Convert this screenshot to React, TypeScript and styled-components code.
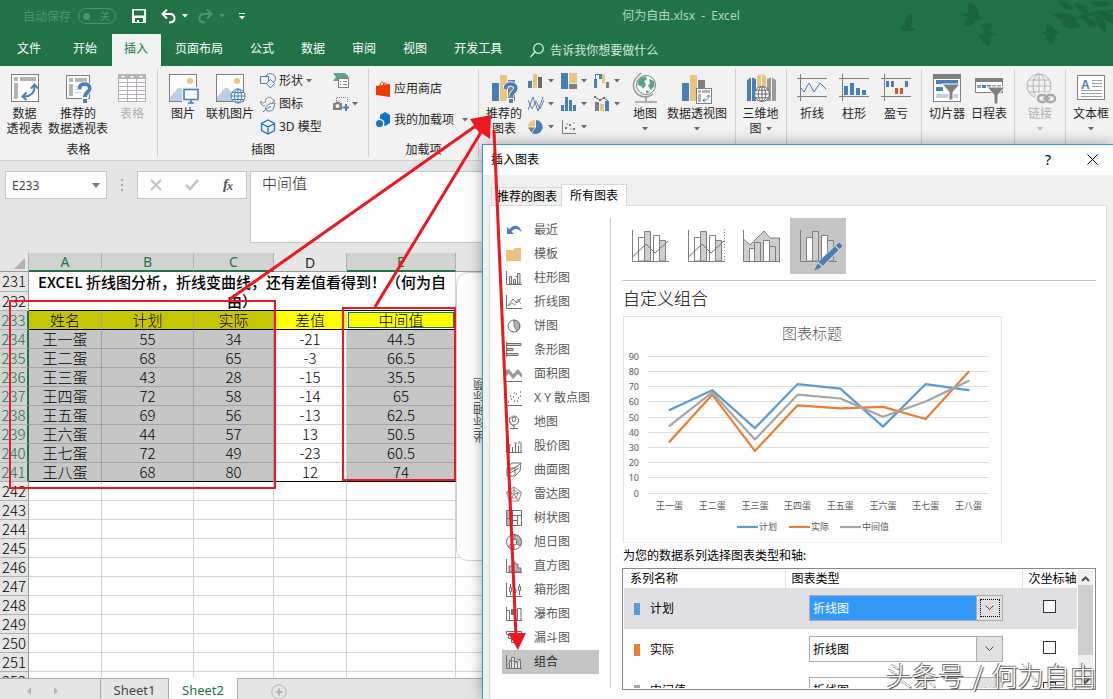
import React from "react";
import styled, { createGlobalStyle, css } from "styled-components";

const GREEN = "#217346";
const BLUE = "#477fb9";
const GOLD = "#ecc57c";
const GRAY = "#7f7f7f";
const RED = "#ee1620";
const UI = `"Noto Sans", "Noto Sans CJK SC", sans-serif`;
const SHEET = `"Noto Sans CJK SC", "Noto Sans", sans-serif`;

const Global = createGlobalStyle`
  * { box-sizing: border-box; }
  body { margin: 0; font-family: ${UI}; font-size: 12px; color: #262626; overflow: hidden; }
  button, input, select, textarea { font: inherit; color: inherit; margin: 0; }
  button { background: none; border: 0; padding: 0; }
  svg { display: block; flex: none; }
`;

const Page = styled.div`
  position: relative;
  display: flex;
  flex-direction: column;
  height: 100vh;
  overflow: hidden;
  background: #e6e6e6;
`;

/* ---------- title bar and ribbon tabs ---------- */

const Head = styled.header`
  position: relative;
  background: ${GREEN};
  color: #fff;
`;
const Birds = styled.svg`
  position: absolute;
  top: 0;
  right: 0;
`;
const TitleBar = styled.div`
  display: flex;
  align-items: center;
  height: 34px;
  padding: 0 0 2px 23px;
`;
const QuickAccess = styled.div`
  display: flex;
  align-items: center;
  width: 226px;
  color: #4f9370;
`;
const Switch = styled.button`
  display: flex;
  align-items: center;
  justify-content: space-between;
  width: 38px;
  height: 16px;
  margin: 0 16px 0 7px;
  padding: 0 5px 0 4px;
  border: 1px solid #4f9370;
  border-radius: 8px;
  font-size: 10px;
  line-height: 14px;
  &::before {
    content: "";
    width: 7px;
    height: 7px;
    border-radius: 50%;
    background: #4f9370;
  }
`;
const QuickButton = styled.button<{ $gap: number }>`
  margin-right: ${(p) => p.$gap}px;
`;
const DocTitle = styled.h1`
  flex: 1;
  margin: 0;
  text-align: center;
  font-size: 12px;
  font-weight: 400;
  line-height: 18px;
  color: #b5d6c3;
  white-space: pre;
`;
const Tabs = styled.nav`
  display: flex;
  gap: 2px;
  height: 32px;
`;
const Tab = styled.button<{ $active?: boolean; $file?: boolean }>`
  padding: ${(p) => (p.$file ? "0 18px 2px 17px" : "0 13px 2px 12px")};
  line-height: 18px;
  white-space: nowrap;
  color: ${(p) => (p.$active ? GREEN : "#fff")};
  background: ${(p) => (p.$active ? "#f2f2f2" : "transparent")};
`;
const TellMe = styled.button`
  display: flex;
  align-items: center;
  gap: 6px;
  margin-left: 13px;
  color: #d6e8de;
  white-space: nowrap;
`;

/* ---------- ribbon ---------- */

const Ribbon = styled.div`
  display: flex;
  height: 95px;
  padding-top: 3px;
  background: #f2f2f2;
  border-bottom: 1px solid #d2d2d2;
  overflow: hidden;
`;
const Group = styled.section<{ $width?: number; $pad: number }>`
  display: flex;
  flex-direction: column;
  justify-content: space-between;
  flex: ${(p) => (p.$width ? `0 0 ${p.$width}px` : "1")};
  height: 88px;
  padding-left: ${(p) => p.$pad}px;
  border-right: ${(p) => (p.$width ? "1px solid #d0d0d0" : "0")};
`;
const GroupBody = styled.div`
  display: flex;
`;
const GroupLabel = styled.div<{ $pad: number }>`
  margin-left: -${(p) => p.$pad}px;
  text-align: center;
  line-height: 14px;
`;
const BigButton = styled.button<{ $width: number; $dim?: boolean }>`
  display: flex;
  flex-direction: column;
  align-items: center;
  gap: 2px;
  width: ${(p) => p.$width}px;
  padding-top: 3px;
  line-height: 15px;
  white-space: nowrap;
  color: ${(p) => (p.$dim ? "#b1b1b1" : "#262626")};
`;
const Line = styled.span`
  display: flex;
  align-items: center;
  justify-content: center;
  gap: 4px;
  height: 15px;
`;
const SmallColumn = styled.div<{ $left?: number; $width: number; $top?: number }>`
  display: flex;
  flex-direction: column;
  width: ${(p) => p.$width}px;
  margin-left: ${(p) => p.$left || 0}px;
  padding-top: ${(p) => p.$top || 0}px;
`;
const SmallButton = styled.button<{ $height?: number; $gap?: number }>`
  display: flex;
  align-items: center;
  gap: ${(p) => p.$gap ?? 3}px;
  height: ${(p) => p.$height || 23}px;
  line-height: 18px;
  white-space: nowrap;
`;
const ChartGrid = styled.div`
  display: grid;
  grid-template-columns: repeat(3, 33px);
  grid-auto-rows: 23px;
  margin-left: 1px;
`;
const Spacer = styled.span`
  width: 4px;
`;

const Caret = ({ color = "#6a6a6a" }: { color?: string }) => (
  <svg width="6" height="4" viewBox="0 0 6 4">
    <path d="M0 0H6L3 3.5Z" fill={color} />
  </svg>
);

/* ---------- formula bar ---------- */

const FormulaRow = styled.div`
  display: flex;
  align-items: flex-start;
  height: 92px;
  padding: 10px 0 0 5px;
`;
const Boxed = css`
  border: 1px solid #c6c6c6;
  background: #fff;
`;
const NameBox = styled.div`
  ${Boxed}
  display: flex;
  align-items: center;
  width: 102px;
  height: 28px;
  padding: 0 6px;
`;
const NameInput = styled.input`
  flex: 1;
  min-width: 0;
  padding: 0;
  border: 0;
  background: none;
  color: #444;
`;
const Grip = styled.div`
  width: 30px;
  height: 28px;
  display: flex;
  flex-direction: column;
  align-items: center;
  justify-content: center;
  gap: 3px;
  i {
    width: 2px;
    height: 2px;
    background: #a6a6a6;
  }
`;
const FormulaTools = styled.div`
  ${Boxed}
  display: flex;
  align-items: center;
  justify-content: space-between;
  width: 110px;
  height: 28px;
  margin-right: 3px;
  padding: 0 11px 0 12px;
`;
const FormulaInput = styled.textarea`
  ${Boxed}
  flex: 1;
  height: 72px;
  padding: 1px 11px;
  resize: none;
  font-family: ${SHEET};
  font-size: 15px;
  font-weight: 300;
  line-height: 20px;
  color: #262626;
`;

/* ---------- worksheet ---------- */

const SheetArea = styled.main`
  position: relative;
  flex: 1;
  min-height: 0;
  overflow: hidden;
  background: #fff;
`;
const Grid = styled.table`
  width: 100%;
  table-layout: fixed;
  border-collapse: separate;
  border-spacing: 0;
  font-family: ${SHEET};
  font-size: 15px;
  font-weight: 300;
  line-height: 18px;
  text-align: center;
  color: #000;
`;
const ColHead = styled.th<{ $on?: boolean; $last?: boolean }>`
  height: 19px;
  padding: 0;
  font-family: ${UI};
  font-size: 14px;
  font-weight: 400;
  line-height: 17px;
  background: ${(p) => (p.$on ? "#d2d2d2" : "#e6e6e6")};
  color: ${(p) => (p.$on ? GREEN : "#262626")};
  border-right: ${(p) => (p.$last ? "0" : "1px solid #b1b1b1")};
  border-bottom: ${(p) => (p.$on ? `2px solid ${GREEN}` : "1px solid #9b9b9b")};
`;
const RowHead = styled.th<{ $on?: boolean }>`
  height: 19px;
  padding: 0;
  font-weight: 300;
  background: ${(p) => (p.$on ? "#d2d2d2" : "#e6e6e6")};
  color: ${(p) => (p.$on ? GREEN : "#000")};
  border-right: ${(p) => (p.$on ? `2px solid ${GREEN}` : "1px solid #9b9b9b")};
  border-bottom: 1px solid #b1b1b1;
`;
const TitleCell = styled.td`
  padding: 0;
  font-weight: 500;
  line-height: 19px;
  vertical-align: top;
  white-space: nowrap;
  text-spacing-trim: space-all;
  border-bottom: 1px solid #000;
  border-right: 1px solid #d4d4d4;
`;
const Cell = styled.td<{ $fill?: string; $sel?: boolean; $rule?: boolean; $active?: boolean }>`
  height: 19px;
  padding: 0;
  background: ${(p) => p.$fill || "#fff"};
  border-right: 1px solid ${(p) => (p.$sel ? "#a3a3a3" : "#d4d4d4")};
  border-bottom: 1px solid ${(p) => (p.$rule ? "#000" : p.$sel ? "#a3a3a3" : "#d4d4d4")};
  box-shadow: ${(p) => (p.$active ? `inset 0 0 0 1px #fff, inset 0 0 0 2px ${GREEN}` : "none")};
`;
const ChartObject = styled.div`
  position: absolute;
  top: 19px;
  left: 456px;
  right: 0;
  height: 289px;
  padding: 105px 0 0 15px;
  border: 1px solid #d0d0d0;
  border-radius: 12px;
  background: #fff;
`;
const AxisTitle = styled.div`
  writing-mode: vertical-rl;
  transform: rotate(180deg);
  width: 16px;
  font-size: 13px;
  line-height: 16px;
  color: #595959;
`;
const SheetBar = styled.footer`
  display: flex;
  height: 21px;
  flex: none;
  border-top: 1px solid #ababab;
  color: #444;
`;
const SheetNav = styled.div`
  display: flex;
  align-items: center;
  gap: 23px;
  width: 100px;
  padding: 4px 0 0 27px;
`;
const SheetTab = styled.button<{ $active?: boolean }>`
  width: 69px;
  padding-top: 2px;
  font-size: 13px;
  line-height: 18px;
  border: solid #ababab;
  border-width: 0 1px;
  ${(p) =>
    p.$active &&
    css`
      margin-top: -1px;
      border-left: 0;
      background: #fff;
      color: ${GREEN};
      padding-top: 3px;
    `}
`;
const AddSheet = styled.button`
  margin-left: 33px;
  padding-top: 5px;
  align-self: flex-start;
`;

/* ---------- dialog ---------- */

const Dialog = styled.section`
  position: absolute;
  top: 144px;
  left: 482px;
  right: 0;
  bottom: 0;
  display: flex;
  flex-direction: column;
  overflow: hidden;
  background: #f0f0f0;
  color: #000;
  border: solid #3398cc;
  border-width: 1px 0 0 1px;
`;
const DialogShadow = styled.div`
  position: absolute;
  top: 144px;
  left: 482px;
  right: 0;
  bottom: 0;
  box-shadow: 0 0 14px rgba(0, 0, 0, 0.35);
`;
const DialogTitle = styled.div`
  display: flex;
  align-items: center;
  height: 30px;
  padding: 0 15px 1px 8px;
  background: #fff;
  h2 {
    flex: 1;
    margin: 0;
    font-size: 12px;
    font-weight: 400;
    line-height: 18px;
  }
`;
const HelpButton = styled.button`
  width: 20px;
  margin-right: 29px;
  font-size: 14px;
  line-height: 20px;
`;
const DialogTabs = styled.div`
  display: flex;
  align-items: flex-end;
  height: 30px;
  padding-left: 8px;
`;
const DialogTab = styled.button<{ $active?: boolean }>`
  height: ${(p) => (p.$active ? 22 : 18)}px;
  padding: 0 5px;
  line-height: 18px;
  white-space: nowrap;
  border: 1px solid #d9d9d9;
  border-bottom: 0;
  background: ${(p) => (p.$active ? "#fff" : "#f0f0f0")};
  ${(p) =>
    p.$active &&
    css`
      position: relative;
      margin-bottom: -1px;
      padding: 0 8px;
      margin-left: -2px;
    `}
`;
const Panel = styled.div`
  display: flex;
  flex: 1;
  min-height: 0;
  margin: 0 6px 0 6px;
  padding: 12px 10px 0 12px;
  background: #fff;
  border: solid #d9d9d9;
  border-width: 1px 1px 0;
`;
const TypeList = styled.ul`
  flex: 0 0 109px;
  height: 470px;
  margin: 0;
  padding: 0 11px 0 0;
  list-style: none;
  border-right: 1px solid #c6c6c6;
`;
const TypeItem = styled.button<{ $on?: boolean }>`
  display: flex;
  align-items: center;
  gap: 12px;
  width: 97px;
  height: 24px;
  padding-left: 4px;
  line-height: 18px;
  white-space: nowrap;
  text-align: left;
  background: ${(p) => (p.$on ? "#c5c5c5" : "transparent")};
  color: ${(p) => (p.$on ? "#262626" : "#595959")};
`;
const Right = styled.div`
  flex: 1;
  min-width: 0;
  padding-left: 11px;
`;
const Thumbs = styled.div`
  display: flex;
  height: 63px;
  border-bottom: 1px solid #c6c6c6;
`;
const Thumb = styled.button<{ $on?: boolean }>`
  width: 56px;
  height: 56px;
  background: ${(p) => (p.$on ? "#c5c5c5" : "transparent")};
`;
const Heading = styled.h3`
  margin: 6px 0 5px 1px;
  font-size: 17px;
  font-weight: 300;
  line-height: 24px;
`;
const ChartBox = styled.div`
  width: 379px;
  height: 227px;
  margin-left: 1px;
  border: 1px solid #e3e3e3;
  border-bottom-color: #f3f3f3;
`;
const Caption = styled.p`
  margin: 4px 0 3px 1px;
  line-height: 18px;
`;
const SeriesBox = styled.div`
  display: flex;
  height: 122px;
  padding: 1px 2px 0 1px;
  overflow: hidden;
  border: 1px solid #828790;
`;
const TableClip = styled.div`
  flex: 1;
  height: 118px;
  overflow: hidden;
`;
const SeriesTable = styled.table`
  width: 100%;
  table-layout: fixed;
  border-collapse: collapse;
  th {
    height: 18px;
    padding: 0 0 0 6px;
    font-weight: 400;
    line-height: 18px;
    text-align: left;
    white-space: nowrap;
    border-left: 1px solid #e0e0e0;
  }
  th:first-child {
    border-left: 0;
  }
  td {
    height: 41px;
    padding: 0;
  }
`;
const SeriesRow = styled.tr<{ $on?: boolean }>`
  background: ${(p) => (p.$on ? "#e0dfe4" : "#fff")};
`;
const SeriesName = styled.label<{ $color: string }>`
  display: flex;
  align-items: center;
  gap: 10px;
  padding-left: 10px;
  line-height: 18px;
  &::before {
    content: "";
    width: 6px;
    height: 12px;
    background: ${(p) => p.$color};
  }
`;
const SelectWrap = styled.div<{ $on?: boolean }>`
  display: flex;
  width: 194px;
  height: 26px;
  margin: 0 0 1px 24px;
  border: 1px solid #acacac;
  select {
    flex: 1;
    min-width: 0;
    padding: 0 3px;
    border: 0;
    border-radius: 0;
    appearance: none;
    outline: 0;
    background: ${(p) => (p.$on ? "#3399ff" : "#fff")};
    color: ${(p) => (p.$on ? "#fff" : "#000")};
  }
`;
const DropMark = styled.span<{ $on?: boolean }>`
  display: flex;
  align-items: center;
  justify-content: center;
  width: 26px;
  background: #e1e1e1;
  border-left: 1px solid #acacac;
  span {
    display: flex;
    align-items: center;
    justify-content: center;
    width: 20px;
    height: 18px;
    border: 1px dotted ${(p) => (p.$on ? "#000" : "transparent")};
  }
`;
const Check = styled.input`
  display: block;
  width: 13px;
  height: 13px;
  margin: 0 0 5px 21px;
  appearance: none;
  border: 1px solid #333;
  background: #fff;
`;
const ScrollBar = styled.div`
  display: flex;
  flex-direction: column;
  align-items: center;
  justify-content: space-between;
  width: 15px;
  height: 118px;
  margin-left: 1px;
  padding: 6px 0 4px;
  background: #f0f0f0;
`;
const ScrollThumb = styled.div`
  width: 15px;
  height: 70px;
  margin-bottom: 20px;
  background: #cdcdcd;
`;
const Watermark = styled.div`
  position: absolute;
  right: 17px;
  bottom: 6px;
  font-family: ${SHEET};
  font-size: 26px;
  font-weight: 300;
  line-height: 36px;
  white-space: pre;
  color: #fff;
  text-shadow: 1px 1px 1px #333, -1px -1px 0 #777;
  span {
    padding: 0 3px;
  }
`;
const Marks = styled.svg`
  position: absolute;
  inset: 0;
  width: 100%;
  height: 100%;
  pointer-events: none;
`;

/* ---------- icons ---------- */

const Big = ({ children }: { children: React.ReactNode }) => (
  <svg width="32" height="32" viewBox="0 0 32 32" fill="none">{children}</svg>
);
const Sm = ({ children }: { children: React.ReactNode }) => (
  <svg width="16" height="16" viewBox="0 0 16 16" fill="none">{children}</svg>
);

const Question = () => (
  <>
    <path d="M17.500 17C17.500 13.200 20 12 22.500 12C25.500 12 27.800 13.500 27.800 16.300C27.800 20 23 20 23 25" stroke="#f2f2f2" strokeWidth="5.400" />
    <path d="M17.500 17C17.500 13.200 20 12 22.500 12C25.500 12 27.800 13.500 27.800 16.300C27.800 20 23 20 23 25" stroke={BLUE} strokeWidth="3.600" />
    <rect x="20" y="26" width="6" height="6" fill="#f2f2f2" />
    <rect x="21" y="27" width="4" height="4" fill={BLUE} />
  </>
);
const Picture = () => (
  <>
    <rect x="2.500" y="2.500" width="27" height="27" fill="#fff" stroke={GRAY} />
    <circle cx="23" cy="9" r="3" fill={GOLD} />
    <path d="M3 29V25L11 16L14 16L21 24V29Z" fill="#bdd0e8" />
  </>
);
const Globe = ({ cx, cy, r, color, bg = "#f2f2f2" }: { cx: number; cy: number; r: number; color: string; bg?: string }) => (
  <g stroke={color}>
    <circle cx={cx} cy={cy} r={r} fill={bg} />
    <ellipse cx={cx} cy={cy} rx={r / 2} ry={r} />
    <path d={`M${cx} ${cy - r}V${cy + r}M${cx - r} ${cy}H${cx + r}M${cx - r * 0.85} ${cy - r / 2}H${cx + r * 0.85}M${cx - r * 0.85} ${cy + r / 2}H${cx + r * 0.85}`} />
  </g>
);

const PivotIcon = () => (
  <Big>
    <rect x="2.500" y="2.500" width="27" height="27" fill="#fff" stroke={GRAY} />
    <path d="M5 5H9V9H5ZM11 5H27V9H11ZM5 11H9V27H5Z" fill="#b3b3b3" />
    <path d="M14 24.500C21 25 26 21 25.500 13.500" stroke={BLUE} strokeWidth="2" />
    <path d="M22 16.500L25.500 12.500L29 16.500M17.500 20.500L13.500 24.500L17.500 28" stroke={BLUE} strokeWidth="2" />
  </Big>
);
const PivotHelpIcon = () => (
  <Big>
    <rect x="4.500" y="3.500" width="23" height="23" fill="#fff" stroke={GRAY} />
    <path d="M7 6H11V10H7ZM13 6H25V10H13ZM7 12H11V24H7Z" fill="#b3b3b3" />
    <path d="M13 14.500H20M13 17.500H20M13 20.500H20" stroke="#d0d0d0" />
    <Question />
  </Big>
);
const TableIcon = () => (
  <Big>
    <path d="M2 2H30V30H2Z" fill="#b3b3b3" />
    <path d="M3 7H29V29H3Z" fill="#fff" />
    <path d="M3 10.500H29M3 14.500H29M3 18.500H29M3 22.500H29M3 26.500H29M11.500 7V29M20.500 7V29" stroke="#b8adb8" />
    <path d="M5 4H9L7 6ZM14 4H18L16 6ZM23 4H27L25 6Z" fill="#fff" />
  </Big>
);
const PictureIcon = () => (
  <Big>
    <Picture />
    <rect x="15" y="15" width="17" height="16" fill="#f2f2f2" />
    <rect x="17" y="17.500" width="14" height="10" fill="#fff" stroke={BLUE} strokeWidth="1.600" />
    <path d="M24 28V30.500M21 31H27" stroke={BLUE} strokeWidth="1.600" />
  </Big>
);
const OnlinePictureIcon = () => (
  <Big>
    <Picture />
    <Globe cx={24} cy={24} r={7} color={BLUE} bg="#fff" />
  </Big>
);
const ShapesIcon = () => (
  <Sm>
    <circle cx="10.500" cy="5.500" r="5" stroke={BLUE} fill="#f2f2f2" />
    <rect x="0.500" y="3.500" width="8" height="7" fill="#f2f2f2" stroke={BLUE} />
    <path d="M10.500 6.500L14.500 10.500L10.500 15L6.500 10.500Z" fill="#f2f2f2" stroke={BLUE} />
  </Sm>
);
const IconsIcon = () => (
  <Sm>
    <path d="M0.500 5C2 7.500 4 7 5.500 6C5 2.500 8 0.500 10.500 1.500C12.500 2.300 12 4.500 14.500 4C14 6 13 6.500 12 7M0.500 5C0.500 9 3 10 5 9.500" stroke={GRAY} />
    <path d="M15 7C10 7 5.500 9 5.500 13C5.500 15 10 16 12.500 14C14.500 12 14 9 15 7ZM3 16C6 12.500 9 11.500 11 10.500" stroke={BLUE} />
  </Sm>
);
const CubeIcon = () => (
  <Sm>
    <path d="M8 1L14.500 4.500V11.500L8 15L1.500 11.500V4.500ZM1.500 4.500L8 8L14.500 4.500M8 8V15" stroke="#1f74c4" strokeWidth="1.300" />
  </Sm>
);
const SmartArtIcon = () => (
  <Sm>
    <path d="M0 0H12L16 4L12 8H0L3 4Z" fill="#5aa588" />
    <rect x="5.500" y="5.500" width="10" height="9" fill="#fff" stroke={GRAY} />
    <path d="M7 8.500H8M10 8.500H14M7 11.500H8M10 11.500H14" stroke={GRAY} />
  </Sm>
);
const ScreenshotIcon = () => (
  <Sm>
    <path d="M3.500 5V1.500H14.500V6" stroke={GRAY} strokeDasharray="1 1" />
    <path d="M0 7H2L3 5.500H6L7 7H9V14H0Z" fill={GRAY} />
    <circle cx="4.500" cy="10" r="2" fill="#f2f2f2" />
    <path d="M13 8V15M9.500 11.500H16" stroke={BLUE} strokeWidth="2" />
  </Sm>
);
const StoreIcon = () => (
  <Sm>
    <path d="M0 5L14 3V16L0 14Z" fill="#eb3c00" />
    <path d="M4 5C4 0 8 0 8 4M7 5C7 1 11 1 10.500 4" stroke="#eb3c00" />
  </Sm>
);
const AddinsIcon = () => (
  <Sm>
    <path d="M4 3L9 0L14 3V11L9 14L8 13V9L4 7Z" fill="#0f72c6" />
    <circle cx="3.500" cy="11.500" r="3.500" fill="#0f72c6" />
    <path d="M4 7.500C7 7.500 8 9 8 12" stroke="#f2f2f2" />
  </Sm>
);
const ChartHelpIcon = () => (
  <Big>
    <rect x="4" y="11" width="7" height="18" fill={BLUE} />
    <rect x="12" y="3" width="7" height="26" fill={GOLD} />
    <rect x="20" y="8" width="7" height="21" fill={GRAY} />
    <Question />
  </Big>
);
const ColumnIcon = () => (
  <Sm>
    <rect x="0" y="8" width="4" height="7" fill={BLUE} />
    <rect x="5" y="1" width="4" height="14" fill={GOLD} />
    <rect x="10" y="4" width="4" height="11" fill="#6b6b6b" />
  </Sm>
);
const TreemapIcon = () => (
  <Sm>
    <rect width="7" height="16" fill={BLUE} />
    <rect x="8" width="8" height="10" fill={GOLD} />
    <rect x="8" y="11" width="8" height="5" fill={GRAY} />
  </Sm>
);
const WaterfallIcon = () => (
  <Sm>
    <rect x="0" y="6" width="3" height="9" fill={BLUE} />
    <path d="M1.500 6V1.500H8" stroke={BLUE} />
    <rect x="5" y="1" width="3" height="5" fill={BLUE} />
    <rect x="8" y="1" width="3" height="9" fill={GOLD} />
    <rect x="12" y="9" width="3" height="6" fill={GRAY} />
  </Sm>
);
const LinesIcon = () => (
  <Sm>
    <path d="M0 4L4 13L8 5L12 13L16 4" stroke={GRAY} />
    <path d="M0 14L5 1L10 15L15 1" stroke={BLUE} />
  </Sm>
);
const HistIcon = () => (
  <Sm>
    <path d="M0 9H3V15H0ZM4 1H7V15H4ZM8 4H11V15H8ZM12 9H15V15H12Z" fill={BLUE} />
  </Sm>
);
const ComboIcon = () => (
  <Sm>
    <rect x="1" y="6" width="4" height="9" fill={GRAY} />
    <rect x="6" y="8" width="4" height="7" fill={GOLD} />
    <rect x="11" y="5" width="4" height="10" fill={BLUE} />
    <path d="M1 1L6 4L10 2L14 5" stroke="#6b6b6b" />
    <path d="M0 0H2V2H0ZM5 3H7V5H5ZM9 1H11V3H9Z" fill="#6b6b6b" />
  </Sm>
);
const PieIcon = () => (
  <Sm>
    <path d="M8 1A7 7 0 1 1 4 14L8 8Z" fill={BLUE} />
    <path d="M7 1V7.500H0A7 7 0 0 1 7 1Z" fill={GOLD} />
    <path d="M0 8.500H7L3.500 13.500Z" fill={GRAY} />
  </Sm>
);
const ScatterIcon = () => (
  <Sm>
    <path d="M1.500 1V14.500H15" stroke={GRAY} />
    <path d="M4 8H6V10H4ZM8 5H10V7H8ZM12 9H14V11H12Z" fill={BLUE} />
    <path d="M5 4H7V6H5ZM9 9H11V11H9ZM12 3H14V5H12Z" fill={GOLD} />
  </Sm>
);
const MapIcon = () => (
  <Big>
    <circle cx="17" cy="13" r="9.500" fill="#fff" stroke={GRAY} />
    <path d="M9 9C11 5 14 4 17 4.500L18 8L15 9L17 13L14 17L12 14L8.500 13ZM20 7L25 9L25.500 14L22 18L19 14L21 11ZM17 18L21 20L17 21.500Z" fill="#5aa588" />
    <path d="M12 1L9 4C3 9 3 18 9 22.500C14 26 20 25.500 24 22M17 25V29M6 30H28" stroke="#9a9a9a" strokeWidth="1.600" />
  </Big>
);
const PivotChartIcon = () => (
  <Big>
    <rect x="1" y="11" width="7" height="18" fill={BLUE} />
    <rect x="9" y="3" width="7" height="26" fill={GOLD} />
    <rect x="17" y="8" width="7" height="21" fill={GRAY} />
    <rect x="15.500" y="16.500" width="15" height="15" fill="#fff" stroke={GRAY} />
    <path d="M17 18H20V21H17ZM21 18H29V21H21ZM17 22H20V30H17Z" fill="#b3b3b3" />
    <path d="M22 28.500C26 28.500 27.500 27 27.500 23.500M25.500 25L27.500 23L29.500 25M24 26.500L22 28.500L24 30.500" stroke={BLUE} />
  </Big>
);
const Map3DIcon = () => (
  <Big>
    <path d="M2 8L6 5.500V29H2ZM7 5.500L11 7V29H7Z" fill={BLUE} />
    <path d="M12 4L16 2V29H12ZM17 2L21 4V29H17Z" fill={GOLD} />
    <path d="M22 7L26 5.500V29H22ZM27 5.500L31 8V29H27Z" fill="#9a9a9a" />
    <Globe cx={17} cy={22} r={7.500} color="#6b6b6b" bg="#fff" />
  </Big>
);
const Spark = ({ children }: { children: React.ReactNode }) => (
  <Big>
    <path d="M1 6.500H31M1 24.500H31M4.500 2V29" stroke={GRAY} />
    {children}
  </Big>
);
const SlicerIcon = ({ timeline }: { timeline?: boolean }) => (
  <Big>
    {timeline ? (
      <>
        <rect x="2.500" y="6.500" width="27" height="14" fill="#fff" stroke={GRAY} />
        <rect x="2" y="6" width="28" height="4" fill={GRAY} />
        <path d="M4 14.500H8M19 14.500H28" stroke="#a0a0a0" strokeWidth="3" strokeDasharray="4 1" />
        <path d="M9 14.500H18" stroke={BLUE} strokeWidth="3" strokeDasharray="4 1" />
      </>
    ) : (
      <>
        <rect x="2.500" y="2.500" width="27" height="27" fill="#fff" stroke={GRAY} />
        <rect x="2" y="2" width="28" height="5" fill={GRAY} />
        <path d="M5 10H27M5 17H12" stroke={BLUE} strokeWidth="4" />
        <path d="M5 24H27" stroke="#bdd0e8" strokeWidth="4" />
      </>
    )}
    <path d={timeline ? "M14 15H32L25 23V32H21V23Z" : "M11 12H29L22 20V28H18V20Z"} fill={GRAY} stroke="#fff" />
  </Big>
);
const LinkIcon = () => (
  <Big>
    <Globe cx={15} cy={14} r={12} color="#b9b1b9" />
    <g stroke="#f2f2f2" strokeWidth="6"><rect x="14" y="23" width="9" height="7" rx="3.500" /><rect x="22" y="23" width="9" height="7" rx="3.500" /></g>
    <g stroke="#a9a9a9" strokeWidth="2.400"><rect x="14" y="23" width="9" height="7" rx="3.500" /><rect x="22" y="23" width="9" height="7" rx="3.500" /><path d="M19 26.500H26" /></g>
  </Big>
);
const TextBoxIcon = () => (
  <Big>
    <rect x="2.500" y="3.500" width="27" height="24" fill="#fff" stroke={GRAY} />
    <text x="6" y="17" fontSize="12" fontWeight="700" fontFamily="Liberation Sans, sans-serif" fill={BLUE}>A</text>
    <path d="M17 8.500H27M17 11.500H27M17 14.500H27M6 18.500H27M6 21.500H27M6 24.500H27" stroke="#a0a0a0" />
  </Big>
);

const BirdsArt = () => (
  <Birds width="218" height="60" viewBox="0 0 218 60" fill="#1c643b" aria-hidden="true">
    <path d="M17 14C11 15 9 20 10 25L5 27L9 31L18 31L21 29L15 27C18 23 17 18 17 14Z" />
    <path d="M75 3C82 5 84 12 84 17L87 19L80 21C78 26 73 28 68 25C71 23 72 20 73 17L66 14L74 13C71 9 73 5 75 3Z" />
    <path d="M86 25C92 22 97 24 99 24C97 26 95 28 95 31L102 34L94 37C95 41 96 43 94 46C89 44 86 41 87 38L82 36L90 33C88 30 88 27 86 25Z" />
    <path d="M153 24C158 25 158 27 159 29L165 32L160 36C160 40 159 43 157 45C153 43 151 39 151 35L146 33L152 31C150 28 152 26 153 24Z" />
    <path d="M218 12C200 14 188 16 178 22L176 20C186 13 200 11 218 10Z" />
    <path d="M158 15C168 10 175 13 180 18C172 22 163 21 158 15ZM163 1C170 0 175 3 178 9C171 10 165 7 163 1ZM180 3C188 3 193 8 193 14C186 14 181 9 180 3ZM196 2C204 2 210 0 216 3C210 9 201 8 196 2ZM166 22C174 18 181 20 186 26C179 30 170 29 166 22ZM187 16C195 16 200 20 201 27C193 27 188 23 187 16ZM200 15C208 16 212 22 211 33C204 29 200 23 200 15ZM202 9L218 15V24C210 21 204 16 202 9Z" />
  </Birds>
);

const UndoArrow = ({ color, flip }: { color: string; flip?: boolean }) => (
  <svg width="15" height="15" viewBox="0 0 15 15" fill="none">
    <g transform={flip ? "matrix(-1 0 0 1 15 0)" : undefined} stroke={color} strokeWidth="2">
      <path d="M1 5H9C12 5 13.500 7 13.500 9.500C13.500 12.500 11 13.500 8 13.500" />
      <path d="M6 0.500L1.500 5L6 9.500" />
    </g>
  </svg>
);

const g = "#6f6f6f";
const listIcons: React.ReactNode[] = [
  <Sm><path d="M1 5V12H8L5.500 9.500C8 6 12 6 15.500 10C14.500 4 8 1 3.500 7.500Z" fill={BLUE} /></Sm>,
  <Sm><path d="M0 4H7L9 2H15V15H0Z" fill="#ebc282" /></Sm>,
  <Sm><path d="M3.500 6.500H5.500V14H3.500ZM7.500 9.500H9.500V14H7.500ZM11.500 3.500H14V14H11.500Z" fill="#e0e0e0" stroke={g} /><path d="M0.500 1V14.500H16M9.500 6.500H11.500" stroke={g} /></Sm>,
  <Sm><path d="M0.500 1V14.500H16" stroke={g} /><path d="M2 12L7 5L11 9L15 4" stroke={g} /><path d="M3 12L6 9L9 11L12 5L15 10" stroke="#9a9a9a" /></Sm>,
  <Sm><circle cx="8" cy="8" r="6" stroke={g} /><path d="M8 2A6 6 0 0 1 11 13L8 8Z" fill="#b5b5b5" stroke={g} /></Sm>,
  <Sm><path d="M1 1.500H15V3.500H1ZM1 6.500H7V8.500H1ZM1 11.500H12V13.500H1Z" fill="#cfcfcf" stroke={g} /><path d="M0.500 0V15" stroke={g} /></Sm>,
  <Sm><path d="M0 10V4L3 3L7 8L12 3L16 8V12L12 8L7 13L3 8Z" fill="#9a9a9a" /><path d="M0 15.500H16" stroke={g} /></Sm>,
  <Sm><path d="M0 15.500H16" stroke={g} /><path d="M2 12H3M5 9H6M8 11H9M4 6H5M7 7H8M10 4H11M12 8H13M14 2H15M11 11H12M14 6H15M8 3H9" stroke={g} strokeWidth="1.500" /></Sm>,
  <Sm><circle cx="8" cy="6.500" r="4.500" stroke={g} /><path d="M6 4L9 3L10 6L7 8ZM4 3C2 8 5 12 9 12M8 12V14.500M4 14.500H12" stroke={g} /></Sm>,
  <Sm><path d="M0.500 1V14.500H16M3.500 14V7M6.500 14V9M9.500 14V6M12.500 14V8M15 14V4M2 7H5M8 5H11M13 3V6" stroke={g} /></Sm>,
  <Sm><path d="M1 6L6 1H15L14 9L9 14H1ZM1 6H9L15 1M9 6V14M3 9L12 4M2 12L13 6" stroke={g} /></Sm>,
  <Sm><path d="M8 1L15.500 6.500L12.500 15L3.500 15L0.500 6.500ZM8 8V1M8 8L15 6.500M8 8L12.500 15M8 8L3.500 15M8 8L0.500 6.500M8 4L12 7L10.500 12L5 12L4 7Z" stroke="#8a8a8a" /></Sm>,
  <Sm><path d="M1 1H6V15H1Z" fill="#b5b5b5" /><path d="M0.500 0.500H15.500V15.500H0.500ZM6.500 1V15M1 8.500H6M7 5.500H15M11.500 6V15M7 10.500H11" stroke={g} /></Sm>,
  <Sm><circle cx="8" cy="8" r="7.500" stroke={g} /><path d="M8 0.500A7.500 7.500 0 0 1 14.500 12L10.500 10V6L8 5ZM2 12.500L5 10L8 11V15.500A7 7 0 0 1 2 12.500Z" fill="#b5b5b5" stroke={g} /><circle cx="8" cy="8" r="3" stroke={g} /></Sm>,
  <Sm><path d="M3 8H6V4H9V6H12V10H15V14H3Z" fill="#b5b5b5" stroke={g} /><path d="M0.500 1V14.500H16" stroke={g} /></Sm>,
  <Sm><path d="M0.500 1V15M1 14.500H16M4.500 2V13M13.500 2V13M9 6V12" stroke={g} /><path d="M3.500 5.500H5.500V9.500H3.500ZM12.500 4.500H14.500V8.500H12.500ZM8 7.500H10V10.500H8Z" fill="#fff" stroke={g} /></Sm>,
  <Sm><path d="M0.500 1V15M1 14.500H16M3.500 14V4.500H1M11.500 14V2.500H15V14M7.500 4.500H11" stroke={g} /><path d="M5 3H9V9H5Z" fill={g} /></Sm>,
  <Sm><path d="M0.500 1.500H15.500V4.500H0.500ZM2.500 5H13.500V8.500H2.500ZM5.500 9H10.500V12.500H5.500Z" fill="#fff" stroke={g} /></Sm>,
  <Sm><path d="M3.500 14V6.500H5.500V3.500H8.500V14ZM8.500 14V7.500H11.500V5.500H14.500V14Z" fill="#e4e4e4" /><path d="M0.500 1V14.500H16M3.500 14V6.500H5.500M5.500 14V3.500H8.500V14M8.500 7.500H11.500V14M11.500 5.500H14.500V14" stroke={g} /><path d="M1 11L6 6L9 9L15 6" stroke="#909090" /></Sm>,
];
const listNames = ["最近", "模板", "柱形图", "折线图", "饼图", "条形图", "面积图", "X Y 散点图", "地图", "股价图", "曲面图", "雷达图", "树状图", "旭日图", "直方图", "箱形图", "瀑布图", "漏斗图", "组合"];

const Bars = () => (
  <>
    <path d="M16.500 43V19.500H22.500M31.500 43V17.500H37.500V43" fill="#fff" stroke={GRAY} />
    <path d="M16.500 19.500H22.500V43H16.500Z" fill="#fff" stroke={GRAY} />
    <path d="M22.500 43V13.500H28.500V43ZM37.500 43V22.500H43.500V43Z" fill="#cfcfcf" stroke={GRAY} />
    <path d="M10.500 12V43.500H47" stroke={GRAY} fill="none" />
  </>
);
const ThumbSvg = ({ kind }: { kind: number }) => (
  <svg width="56" height="56" viewBox="0 0 56 56" fill="none">
    {kind === 2 ? (
      <>
        <path d="M9.500 21L16 27L30 13L36 20H45.500V43.500H9.500Z" fill="#cfcfcf" stroke={GRAY} />
        <path d="M15.500 43V30.500H20.500V43M29.500 43V22.500H35.500V43" fill="#fff" stroke={GRAY} />
        <path d="M20.500 43V24.500H26.500V43M35.500 43V28.500H41.500V43" stroke={GRAY} />
        <path d="M9.500 12V43.500H46" stroke={GRAY} />
      </>
    ) : (
      <Bars />
    )}
    {kind < 2 && <path d="M10 39.500L24 26L33 35L46 23" stroke="#6f6f6f" />}
    {kind === 1 && <path d="M46.500 11V43" stroke={GRAY} strokeDasharray="1 2" />}
    {kind === 3 && (
      <>
        <path d="M48 24L27 45L24 53L32 50L53 29Z" fill="#c5c5c5" />
        <path d="M49 25L52 28L49.500 30.500L46.500 27.500ZM45 29L48 32L33 47L29 44ZM28 46L31 49L25 52Z" fill={BLUE} stroke={BLUE} />
      </>
    )}
  </svg>
);

/* ---------- data ---------- */

const rows: [string, number, number, number, number][] = [
  ["王一蛋", 55, 34, -21, 44.5],
  ["王二蛋", 68, 65, -3, 66.5],
  ["王三蛋", 43, 28, -15, 35.5],
  ["王四蛋", 72, 58, -14, 65],
  ["王五蛋", 69, 56, -13, 62.5],
  ["王六蛋", 44, 57, 13, 50.5],
  ["王七蛋", 72, 49, -23, 60.5],
  ["王八蛋", 68, 80, 12, 74],
];
const series = [
  { name: "计划", color: "#5b9bd5", col: 1, x: 113 },
  { name: "实际", color: "#ed7d31", col: 2, x: 165 },
  { name: "中间值", color: "#a5a5a5", col: 4, x: 216 },
];
const yOf = (v: number) => 176.500 - v * 1.52;
const xOf = (i: number) => 45.500 + i * 42.700;

const PreviewChart = () => (
  <svg width="377" height="225" viewBox="0 0 377 225" fontFamily={SHEET} fill="#595959" fontSize="9">
    <text x="188" y="22" fontSize="15" fontWeight="300" textAnchor="middle">图表标题</text>
    {[0, 10, 20, 30, 40, 50, 60, 70, 80, 90].map((v) => (
      <g key={v}>
        <path d={`M24 ${Math.round(yOf(v)) - 0.5}H365`} stroke="#dedede" />
        <text x="15" y={yOf(v) + 3} textAnchor="end" fontFamily={UI}>{v}</text>
      </g>
    ))}
    {series.map((s) => (
      <polyline
        key={s.name}
        fill="none"
        stroke={s.color}
        strokeWidth="2.200"
        strokeLinejoin="round"
        strokeLinecap="round"
        points={rows.map((r, i) => `${xOf(i)},${yOf(r[s.col] as number)}`).join(" ")}
      />
    ))}
    {rows.map((r, i) => (
      <text key={r[0]} x={xOf(i)} y="192" textAnchor="middle">{r[0]}</text>
    ))}
    {series.map((s) => (
      <g key={s.name}>
        <path d={`M${s.x} 210H${s.x + 21}`} stroke={s.color} strokeWidth="2.200" />
        <text x={s.x + 22} y="213">{s.name}</text>
      </g>
    ))}
  </svg>
);

const chartButtons: [string, () => React.JSX.Element][] = [
  ["柱形图", ColumnIcon], ["层次结构图", TreemapIcon], ["瀑布图", WaterfallIcon],
  ["折线图", LinesIcon], ["统计图", HistIcon], ["组合图", ComboIcon],
  ["饼图", PieIcon], ["散点图", ScatterIcon],
];

export default function App() {
  return (
    <Page>
      <Global />
      <Head>
        <BirdsArt />
        <TitleBar>
          <QuickAccess>
            <span>自动保存</span>
            <Switch>关</Switch>
            <QuickButton $gap={15} aria-label="保存">
              <svg width="14" height="14" viewBox="0 0 14 14"><path fillRule="evenodd" fill="#fff" d="M0 0H14V14H0ZM2 1.500V6.500H12V1.500ZM3 9V13H5V11H7V13H11V9Z" /></svg>
            </QuickButton>
            <QuickButton $gap={6} aria-label="撤消"><UndoArrow color="#fff" /></QuickButton>
            <QuickButton $gap={10} aria-label="撤消选项"><Caret color="#fff" /></QuickButton>
            <QuickButton $gap={6} aria-label="恢复"><UndoArrow color="#4f9370" flip /></QuickButton>
            <QuickButton $gap={14} aria-label="恢复选项"><Caret color="#4f9370" /></QuickButton>
            <QuickButton $gap={0} aria-label="自定义快速访问工具栏">
              <svg width="6" height="8" viewBox="0 0 6 8" fill="#fff"><path d="M0 1H6V2H0ZM0 4H6L3 7.500Z" /></svg>
            </QuickButton>
          </QuickAccess>
          <DocTitle>{"何为自由.xlsx  -  Excel"}</DocTitle>
        </TitleBar>
        <Tabs>
          {["文件", "开始", "插入", "页面布局", "公式", "数据", "审阅", "视图", "开发工具"].map((t) => (
            <Tab key={t} $file={t === "文件"} $active={t === "插入"}>{t}</Tab>
          ))}
          <TellMe>
            <svg width="14" height="15" viewBox="0 0 14 15" fill="none" stroke="#e6f0ea" strokeWidth="1.200"><circle cx="8.500" cy="5.500" r="4.800" /><path d="M5 9L0.500 14" /></svg>
            告诉我你想要做什么
          </TellMe>
        </Tabs>
      </Head>

      <Ribbon>
        <Group $width={158} $pad={1}>
          <GroupBody>
            <BigButton $width={47}><PivotIcon /><span>数据<br />透视表</span></BigButton>
            <BigButton $width={60}><PivotHelpIcon /><span>推荐的<br />数据透视表</span></BigButton>
            <BigButton $width={48} $dim><TableIcon /><span>表格</span></BigButton>
          </GroupBody>
          <GroupLabel $pad={1}>表格</GroupLabel>
        </Group>
        <Group $width={211} $pad={3}>
          <GroupBody>
            <BigButton $width={44}><PictureIcon /><span>图片</span></BigButton>
            <BigButton $width={50}><OnlinePictureIcon /><span>联机图片</span></BigButton>
            <SmallColumn $left={5} $width={73}>
              <SmallButton><ShapesIcon />形状<Caret /></SmallButton>
              <SmallButton><IconsIcon />图标</SmallButton>
              <SmallButton><CubeIcon />3D 模型</SmallButton>
            </SmallColumn>
            <SmallColumn $width={30}>
              <SmallButton aria-label="SmartArt"><SmartArtIcon /></SmallButton>
              <SmallButton aria-label="屏幕截图"><ScreenshotIcon /><Caret /></SmallButton>
            </SmallColumn>
          </GroupBody>
          <GroupLabel $pad={3}>插图</GroupLabel>
        </Group>
        <Group $width={110} $pad={7}>
          <GroupBody>
            <SmallColumn $width={100} $top={4}>
              <SmallButton $height={31} $gap={2}><StoreIcon />应用商店</SmallButton>
              <SmallButton $height={31} $gap={2}><AddinsIcon />我的加载项<Spacer /><Caret /></SmallButton>
            </SmallColumn>
          </GroupBody>
          <GroupLabel $pad={7}>加载项</GroupLabel>
        </Group>
        <Group $width={257} $pad={2}>
          <GroupBody>
            <BigButton $width={46}><ChartHelpIcon /><span>推荐的<br />图表</span></BigButton>
            <ChartGrid>
              {chartButtons.map(([name, Icon]) => (
                <SmallButton key={name} $gap={4} aria-label={name}><Icon /><Caret /></SmallButton>
              ))}
            </ChartGrid>
            <BigButton $width={36}><MapIcon /><span>地图<Line><Caret /></Line></span></BigButton>
            <BigButton $width={68}><PivotChartIcon /><span>数据透视图<Line><Caret /></Line></span></BigButton>
          </GroupBody>
        </Group>
        <Group $width={51} $pad={0}>
          <GroupBody>
            <BigButton $width={49}><Map3DIcon /><span>三维地<Line>图<Caret /></Line></span></BigButton>
          </GroupBody>
        </Group>
        <Group $width={135} $pad={4}>
          <GroupBody>
            <BigButton $width={42}>
              <Spark><path d="M5 16L8 20L13 11L18 20L24 11L30 17" stroke={BLUE} /></Spark>
              <span>折线</span>
            </BigButton>
            <BigButton $width={42}>
              <Spark><path d="M6 14H10V23H6ZM12 11H16V23H12ZM18 16H22V23H18ZM24 18H28V23H24Z" fill={BLUE} /></Spark>
              <span>柱形</span>
            </BigButton>
            <BigButton $width={42}>
              <Spark>
                <path d="M6 9H9V15H6ZM11 9H14V15H11ZM25 9H28V15H25Z" fill={BLUE} />
                <path d="M15 16H18V22H15ZM20 16H23V22H20Z" fill="#d65532" />
              </Spark>
              <span>盈亏</span>
            </BigButton>
          </GroupBody>
        </Group>
        <Group $width={93} $pad={4}>
          <GroupBody>
            <BigButton $width={42}><SlicerIcon /><span>切片器</span></BigButton>
            <BigButton $width={42}><SlicerIcon timeline /><span>日程表</span></BigButton>
          </GroupBody>
        </Group>
        <Group $width={51} $pad={0}>
          <GroupBody>
            <BigButton $width={50} $dim><LinkIcon /><span>链接<Line><Caret color="#b9b9b9" /></Line></span></BigButton>
          </GroupBody>
        </Group>
        <Group $pad={0}>
          <GroupBody>
            <BigButton $width={50}><TextBoxIcon /><span>文本框<Line><Caret /></Line></span></BigButton>
          </GroupBody>
        </Group>
      </Ribbon>

      <FormulaRow>
        <NameBox>
          <NameInput aria-label="名称框" defaultValue="E233" />
          <svg width="8" height="5" viewBox="0 0 8 5"><path d="M0 0H8L4 5Z" fill="#777" /></svg>
        </NameBox>
        <Grip><i /><i /><i /></Grip>
        <FormulaTools>
          <button aria-label="取消"><svg width="12" height="12" viewBox="0 0 12 12" stroke="#c3c3c3" strokeWidth="2"><path d="M1 1L11 11M11 1L1 11" /></svg></button>
          <button aria-label="输入"><svg width="14" height="12" viewBox="0 0 14 12" fill="none" stroke="#c3c3c3" strokeWidth="2.600"><path d="M1 6L5 10L13 1" /></svg></button>
          <button aria-label="插入函数">
            <svg width="14" height="16" viewBox="0 0 14 16" fill="#555" fontFamily="Liberation Serif, serif" fontStyle="italic" fontWeight="700"><text x="2" y="12" fontSize="15">f</text><text x="6" y="13" fontSize="12">x</text></svg>
          </button>
        </FormulaTools>
        <FormulaInput aria-label="编辑栏" defaultValue="中间值" />
      </FormulaRow>

      <SheetArea>
        <Grid>
          <colgroup>
            {[29, 73, 92, 80, 73, 109].map((w, i) => <col key={i} width={w} />)}
            <col />
          </colgroup>
          <thead>
            <tr>
              <ColHead aria-label="全选">
                <svg width="27" height="17" viewBox="0 0 27 17"><path d="M25 4V15H14Z" fill="#b1b1b1" /></svg>
              </ColHead>
              {["A", "B", "C", "D", "E"].map((c) => <ColHead key={c} $on={c !== "D"}>{c}</ColHead>)}
              <ColHead $last />
            </tr>
          </thead>
          <tbody>
            <tr>
              <RowHead>231</RowHead>
              <TitleCell colSpan={5} rowSpan={2}>EXCEL 折线图分析，折线变曲线，还有差值看得到！（何为自<br />由）</TitleCell>
              <Cell />
            </tr>
            <tr><RowHead>232</RowHead><Cell /></tr>
            <tr>
              <RowHead $on>233</RowHead>
              {["姓名", "计划", "实际"].map((t) => <Cell key={t} $fill="#c6c600" $sel $rule>{t}</Cell>)}
              <Cell $fill="#ff0" $rule>差值</Cell>
              <Cell $fill="#ff0" $rule $active>中间值</Cell>
              <Cell />
            </tr>
            {rows.map((r, i) => (
              <tr key={r[0]}>
                <RowHead $on>{234 + i}</RowHead>
                {r.map((v, c) => (
                  <Cell key={c} $sel={c !== 3} $fill={c !== 3 ? "#c6c6c6" : "#fff"} $rule={i === 7}>{v}</Cell>
                ))}
                <Cell />
              </tr>
            ))}
            {Array.from({ length: 11 }, (_, i) => (
              <tr key={i}>
                <RowHead>{242 + i}</RowHead>
                <Cell /><Cell /><Cell /><Cell /><Cell /><Cell />
              </tr>
            ))}
          </tbody>
        </Grid>
        <ChartObject><AxisTitle>坐标轴标题</AxisTitle></ChartObject>
      </SheetArea>

      <SheetBar>
        <SheetNav>
          <svg width="4" height="8" viewBox="0 0 4 8"><path d="M4 0V8L0 4Z" fill="#b5b5b5" /></svg>
          <svg width="4" height="8" viewBox="0 0 4 8"><path d="M0 0V8L4 4Z" fill="#b5b5b5" /></svg>
        </SheetNav>
        <SheetTab>Sheet1</SheetTab>
        <SheetTab $active>Sheet2</SheetTab>
        <AddSheet aria-label="新工作表">
          <svg width="16" height="16" viewBox="0 0 16 16" fill="none" stroke="#b5b5b5"><circle cx="8" cy="8" r="7.200" /><path d="M8 4.500V11.500M4.500 8H11.500" strokeWidth="2" /></svg>
        </AddSheet>
      </SheetBar>

      <DialogShadow />
      <Dialog role="dialog" aria-label="插入图表">
        <DialogTitle>
          <h2>插入图表</h2>
          <HelpButton aria-label="帮助">?</HelpButton>
          <button aria-label="关闭"><svg width="11" height="11" viewBox="0 0 11 11" stroke="#000"><path d="M0.500 0.500L10.500 10.500M10.500 0.500L0.500 10.500" /></svg></button>
        </DialogTitle>
        <DialogTabs>
          <DialogTab>推荐的图表</DialogTab>
          <DialogTab $active>所有图表</DialogTab>
        </DialogTabs>
        <Panel>
          <TypeList>
            {listNames.map((n, i) => (
              <li key={n}><TypeItem $on={n === "组合"}>{listIcons[i]}{n}</TypeItem></li>
            ))}
          </TypeList>
          <Right>
            <Thumbs>
              {[0, 1, 2, 3].map((k) => (
                <Thumb key={k} $on={k === 3} aria-label={`组合类型 ${k + 1}`}><ThumbSvg kind={k} /></Thumb>
              ))}
            </Thumbs>
            <Heading>自定义组合</Heading>
            <ChartBox><PreviewChart /></ChartBox>
            <Caption>为您的数据系列选择图表类型和轴:</Caption>
            <SeriesBox>
              <TableClip>
                <SeriesTable>
                  <colgroup><col width="161" /><col /><col width="55" /></colgroup>
                  <thead><tr><th>系列名称</th><th>图表类型</th><th>次坐标轴</th></tr></thead>
                  <tbody>
                    {series.map((s, i) => (
                      <SeriesRow key={s.name} $on={i === 0}>
                        <td><SeriesName htmlFor={`type-${i}`} $color={s.color}>{s.name}</SeriesName></td>
                        <td>
                          <SelectWrap $on={i === 0}>
                            <select id={`type-${i}`} defaultValue="折线图"><option>折线图</option></select>
                            <DropMark $on={i === 0}><span><svg width="9" height="6" viewBox="0 0 9 6" fill="none" stroke="#444"><path d="M0.500 0.500L4.500 4.500L8.500 0.500" /></svg></span></DropMark>
                          </SelectWrap>
                        </td>
                        <td><Check type="checkbox" aria-label={`${s.name} 次坐标轴`} /></td>
                      </SeriesRow>
                    ))}
                  </tbody>
                </SeriesTable>
              </TableClip>
              <ScrollBar>
                <svg width="9" height="6" viewBox="0 0 9 6" fill="none" stroke="#505050" strokeWidth="2"><path d="M1 5L4.500 1.500L8 5" /></svg>
                <ScrollThumb />
                <svg width="9" height="6" viewBox="0 0 9 6" fill="none" stroke="#505050" strokeWidth="2"><path d="M1 1L4.500 4.500L8 1" /></svg>
              </ScrollBar>
            </SeriesBox>
          </Right>
        </Panel>
      </Dialog>

      <Marks fill="none" stroke={RED} strokeWidth="2" aria-hidden="true">
        <rect x="10" y="301" width="265" height="187" />
        <rect x="343" y="308" width="112" height="172" />
        <path d="M230 299L477 125M375 307L483 129M494 130L516 636" strokeWidth="3" />
        <path d="M492 115L480 134L470 119ZM491 115L490 139L473 127ZM508 633H526L518 650Z" fill={RED} stroke="none" />
      </Marks>
      <Watermark>头条号<span> / </span>何为自由</Watermark>
    </Page>
  );
}
